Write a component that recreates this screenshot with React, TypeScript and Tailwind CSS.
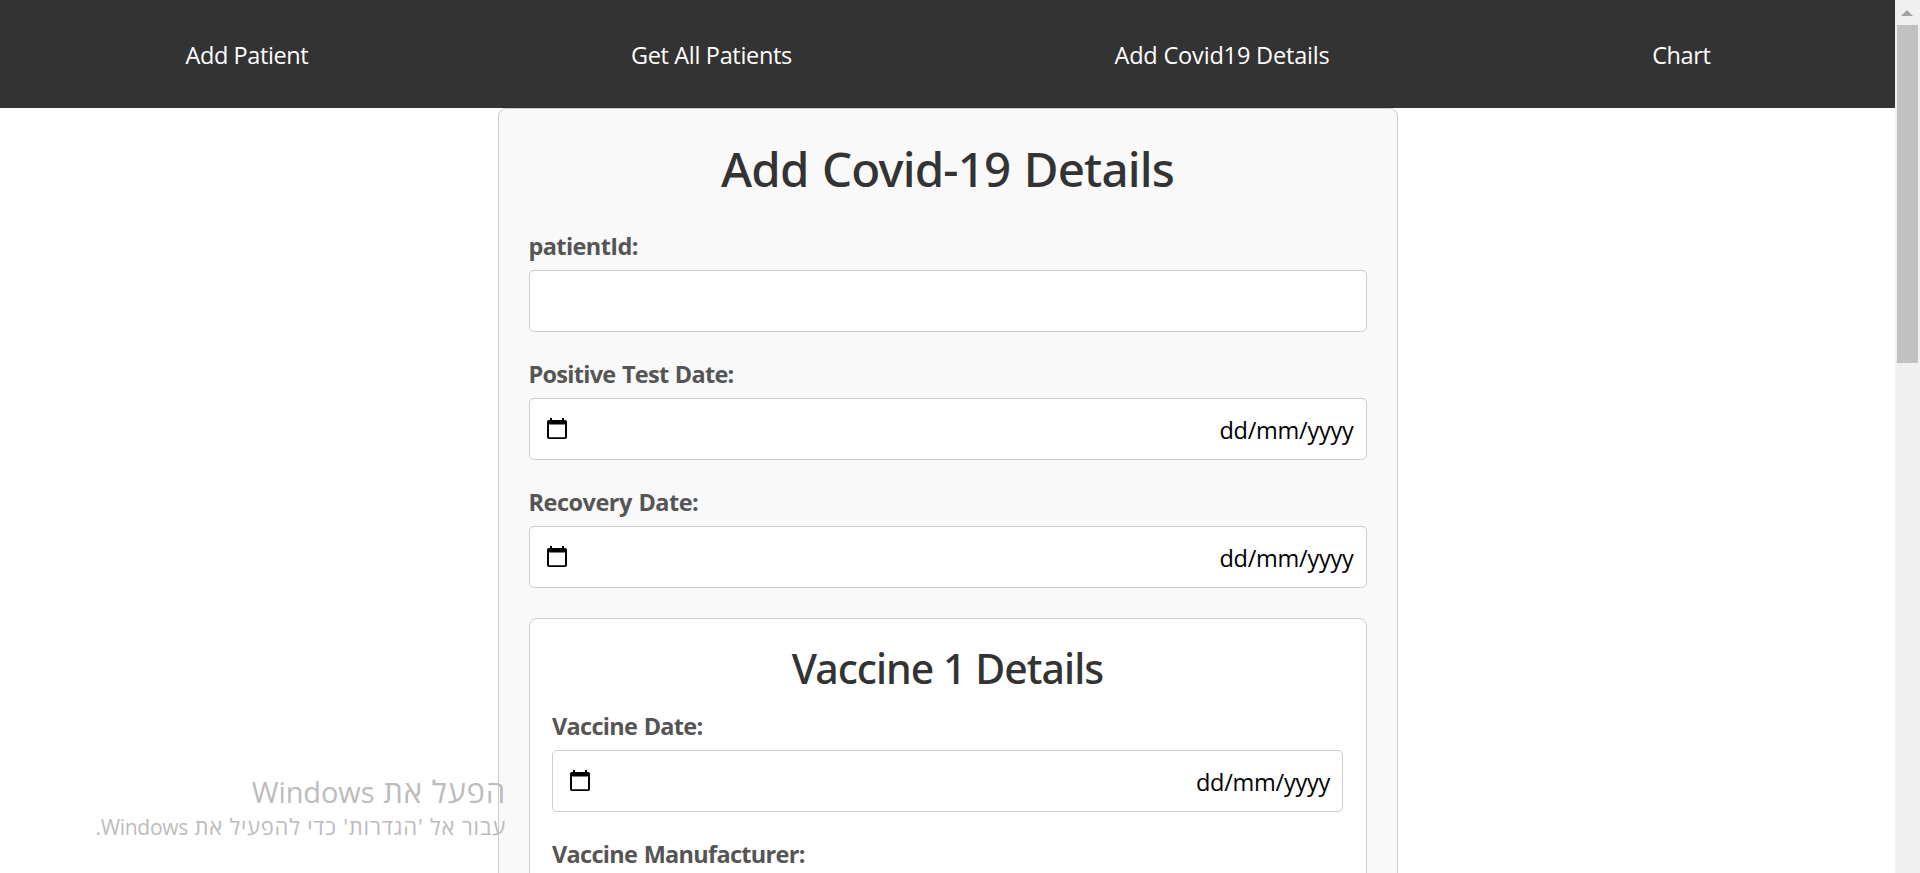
const CalendarIcon = () => (
  <svg width="20" height="21" viewBox="0 0 20 21" className="block shrink-0" aria-hidden="true">
    <path
      fillRule="evenodd"
      d="M3 0h2v2h10V0h2v2h1.2a1.8 1.8 0 0 1 1.8 1.8v15.4a1.8 1.8 0 0 1-1.8 1.8H1.8A1.8 1.8 0 0 1 0 19.200V3.800A1.800 1.800 0 0 1 1.800 2H3zM2 6.600v12.600h16V6.600z"
      fill="#000"
    />
  </svg>
);

type FieldProps = { label: string; spacing: string; date?: boolean };

const Field = ({ label, spacing, date }: FieldProps) => (
  <div className="mb-6">
    <label
      className={`mb-1.5 block h-9 font-['Open_Sans',sans-serif] text-[23.5px] leading-9 font-bold text-[#555] ${spacing}`}
    >
      {label}
    </label>
    <div className="flex h-[62px] items-start justify-between rounded-[5px] border border-[#ccc] bg-white pt-[19px] pr-3 pl-[17px]">
      {date && (
        <>
          <CalendarIcon />
          <span className="-mt-1.5 font-['Open_Sans',sans-serif] text-[23.5px] leading-9 tracking-[-0.25px] text-black">
            dd/mm/yyyy
          </span>
        </>
      )}
    </div>
  </div>
);

const links = [
  { text: "Add Patient", spacing: "tracking-[-0.4px]" },
  { text: "Get All Patients", spacing: "tracking-[-0.33px]" },
  { text: "Add Covid19 Details", spacing: "tracking-[-0.17px]" },
  { text: "Chart", spacing: "tracking-[-0.4px]" },
];

export default function App() {
  return (
    <div className="relative flex h-[873px] w-full overflow-hidden bg-white font-['Noto_Sans',sans-serif]">
      <div className="min-w-0 flex-1">
        <nav className="flex h-[108px] justify-between bg-[#333] pt-[37px] pr-[184.5px] pl-[185.5px] font-['Open_Sans',sans-serif] text-[23.5px] leading-9 text-white">
          {links.map((l) => (
            <a key={l.text} href="#" className={l.spacing}>
              {l.text}
            </a>
          ))}
        </nav>

        <form className="mx-auto w-[900px] rounded-lg border border-[#ccc] bg-[#f9f9f9] p-[30px]">
          <h1 className="mb-[30px] h-[59px] pt-px text-center text-[47.5px] leading-[58px] font-medium tracking-[-0.85px] text-[#333] [word-spacing:2px]">
            Add Covid-19 Details
          </h1>
          <Field label="patientId:" spacing="tracking-[-0.6px]" />
          <Field label="Positive Test Date:" spacing="tracking-[-0.72px] [word-spacing:1px]" date />
          <Field label="Recovery Date:" spacing="tracking-[-0.5px] [word-spacing:1px]" date />

          <section className="mt-[30px] rounded-lg border border-[#ccc] bg-white px-[22.5px] py-[22px]">
            <h2 className="mb-[15px] h-[52px] pt-0.5 text-center text-[41px] leading-[50px] font-medium tracking-[-0.97px] text-[#333]">
              Vaccine 1 Details
            </h2>
            <Field label="Vaccine Date:" spacing="tracking-[-0.7px] [word-spacing:1px]" date />
            <Field label="Vaccine Manufacturer:" spacing="tracking-[-0.7px] [word-spacing:1px]" />
          </section>
        </form>
      </div>

      <div className="flex w-[25px] shrink-0 flex-col items-center bg-[#f0f0f0]">
        <svg width="12" height="6" viewBox="0 0 12 6" className="mt-2.5 mr-px mb-[9px] block shrink-0" aria-hidden="true">
          <path d="M6 0l6 6H0z" fill="#a3a3a3" />
        </svg>
        <div className="mr-px h-[338px] w-[21px] shrink-0 bg-[#c1c1c1]" />
      </div>

      <div
        dir="rtl"
        className="absolute top-[770px] left-[86px] flex w-[420px] flex-col font-['Open_Sans',sans-serif] whitespace-nowrap text-[#bcbcbc]"
      >
        <div className="h-[41px] text-[31px] leading-[42px] tracking-[0.8px]">
          הפעל את <span dir="ltr" className="text-[29px] tracking-[-0.1px]">Windows</span>
        </div>
        <div className="h-[30px] text-[22px] leading-[30px] tracking-[0.8px]">
          עבור אל 'הגדרות' כדי להפעיל את <span className="text-[21px] tracking-[-0.3px]">Windows.</span>
        </div>
      </div>
    </div>
  );
}
